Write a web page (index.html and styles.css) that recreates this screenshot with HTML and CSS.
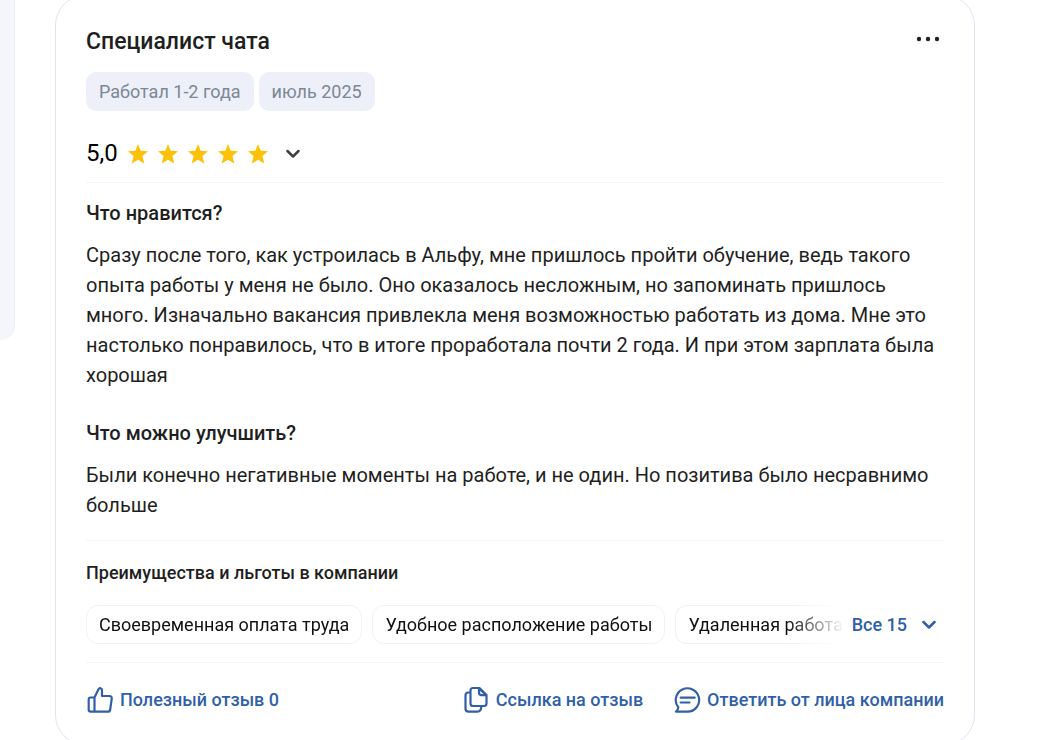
FILE: index.html
```html
<!DOCTYPE html>
<html lang="ru">
<head>
<meta charset="utf-8">
<title>Отзыв: Специалист чата</title>
<link rel="stylesheet" href="styles.css">
</head>
<body>
<svg class="sprite" aria-hidden="true">
  <symbol id="star" viewBox="0 0 20 20"><path d="M10 0l2.700 6.800 7.300.5-5.600 4.700 1.900 7.600L10 15.800 3.700 19.600l1.900-7.600L0 7.300l7.300-.5z"/></symbol>
  <symbol id="chevron" viewBox="0 0 14 10"><path d="M1.500 2L7 7.500 12.500 2"/></symbol>
</svg>
<div class="page">
  <aside class="rail"></aside>
  <article class="card">
    <header class="head">
      <h2 class="title">Специалист чата</h2>
      <button class="more" type="button" aria-label="Ещё">
        <svg width="24" height="6" viewBox="0 0 24 6"><circle cx="3" cy="3" r="2.200"/><circle cx="12" cy="3" r="2.200"/><circle cx="21" cy="3" r="2.200"/></svg>
      </button>
    </header>
    <div class="tags"><span class="tag">Работал 1-2 года</span><span class="tag">июль 2025</span></div>
    <button class="rating" type="button">
      <span class="score">5,0</span>
      <span class="stars">
        <svg class="star"><use href="#star"/></svg><svg class="star"><use href="#star"/></svg><svg class="star"><use href="#star"/></svg><svg class="star"><use href="#star"/></svg><svg class="star"><use href="#star"/></svg>
      </span>
      <svg class="chevron"><use href="#chevron"/></svg>
    </button>
    <section class="answers">
      <h3 class="question">Что нравится?</h3>
      <p class="answer">Сразу после того, как устроилась в Альфу, мне пришлось пройти обучение, ведь такого опыта работы у меня не было. Оно оказалось несложным, но запоминать пришлось много. Изначально вакансия привлекла меня возможностью работать из дома. Мне это настолько понравилось, что в итоге проработала почти 2 года. И при этом зарплата была хорошая</p>
      <h3 class="question">Что можно улучшить?</h3>
      <p class="answer">Были конечно негативные моменты на работе, и не один. Но позитива было несравнимо больше</p>
    </section>
    <section class="benefits">
      <h4 class="subtitle">Преимущества и льготы в компании</h4>
      <div class="benefit-row">
        <div class="benefit-list"><span class="benefit">Своевременная оплата труда</span><span class="benefit">Удобное расположение работы</span><span class="benefit last">Удаленная работа</span></div>
        <button class="all" type="button">Все 15 <svg class="chevron"><use href="#chevron"/></svg></button>
      </div>
    </section>
    <footer class="actions">
      <button class="action useful" type="button">
        <svg class="icon" viewBox="0 0 28 28"><path d="M4.500 11.500H8.500L12.500 3.200C13.500 1.500 16.300 2.200 16 4.500V10H23.500C25.200 10 26 11.200 25.700 12.800L24.200 23.500C24 25 23.300 25.700 22 25.700H4.800C3.500 25.700 2.700 25 2.700 23.500V13.300C2.700 12.200 3.400 11.500 4.500 11.500ZM8.500 11.500V25.500"/></svg>
        Полезный отзыв 0
      </button>
      <button class="action" type="button">
        <svg class="icon" viewBox="0 0 28 28"><path d="M11 2H17.500L24.500 9V17.500C24.500 19.200 23.600 20 22 20H11C9.300 20 8.500 19.200 8.500 17.500V4.500C8.500 2.800 9.300 2 11 2ZM17 2.500V6.500C17 8.500 17.700 9.200 19.500 9.200H24.300L17 2.500M8.500 6.500H6.500C4.500 6.500 3.500 7.500 3.500 9.500V22.500C3.500 24.700 4.500 25.700 6.500 25.700H15.500C18 25.700 19.300 24.200 19.300 20"/></svg>
        Ссылка на отзыв
      </button>
      <button class="action" type="button">
        <svg class="icon" viewBox="0 0 28 28"><path d="M3 25.700H14.500A11.700 11.700 0 1 0 5.300 21.300Q5.200 24 3 25.700ZM7.700 11.700H21.700M7.700 16.500H16.500"/></svg>
        Ответить от лица компании
      </button>
    </footer>
  </article>
</div>
</body>
</html>
```
FILE: styles.css
```css
* { box-sizing: border-box; }
body { margin: 0; height: 100vh; overflow: hidden; background: #fff; color: #1f1f22; font-family: Roboto, "Noto Sans", sans-serif; }
h2, h3, h4, p { margin: 0; font-weight: 500; }
button { padding: 0; border: 0; background: none; color: inherit; font: inherit; cursor: pointer; }
svg { display: block; flex: none; }
.sprite { position: absolute; width: 0; height: 0; }
.page { display: grid; grid-template-columns: 15px minmax(0, 1fr); column-gap: 40px; align-items: start; padding-right: 64px; }
.rail { height: 340px; background: #f5f6fc; border-right: 1px solid #e9ebf3; border-bottom-right-radius: 24px; }
.card { margin-top: -5px; padding: 30px; border: 1px solid #dfe4ee; border-radius: 30px; }
.head { display: flex; justify-content: space-between; align-items: flex-start; }
.title { font-size: 23px; line-height: 32px; }
.more { padding: 10px 4px; }
.more svg { fill: #1f1f22; }
.tags { display: flex; gap: 5px; margin-top: 14px; }
.tag { padding: 1px 13px 0; border-radius: 10px; background: #edf0f9; color: #7b8794; font-size: 18px; line-height: 38px; }
.rating { display: flex; align-items: center; margin-top: 26px; color: #000; }
.score { font-size: 24px; line-height: 32px; }
.stars { display: flex; gap: 10px; margin: 0 18px 0 10px; padding-top: 2px; }
.star { width: 20px; height: 20px; fill: #ffc107; }
.chevron { width: 14px; height: 10px; fill: none; stroke: currentColor; stroke-width: 2.500; stroke-linecap: round; stroke-linejoin: round; }
.rating .chevron { margin-top: 2px; color: #404044; }
.answers { margin-top: 13px; border-top: 1px solid #f3f4f9; }
.question { margin-top: 15px; font-size: 20px; line-height: 30px; }
.answer { margin-top: 12px; font-size: 20px; line-height: 30px; font-weight: 400; }
.answer + .question { margin-top: 28px; }
.benefits { margin-top: 20px; padding: 20px 0 18px; border: solid #f3f4f9; border-width: 1px 0; }
.subtitle { font-size: 18px; line-height: 24px; }
.benefit-row { display: flex; align-items: center; margin-top: 20px; }
.benefit-list { display: flex; flex: 1; gap: 10px; min-width: 0; overflow: hidden; mask-image: linear-gradient(to left, transparent, #000 56px); }
.benefit { flex: none; padding: 1px 12px 0; border: 1px solid #eff1f8; border-radius: 12px; font-size: 18px; line-height: 36px; color: #111; }
.benefit.last { padding-right: 0; border-right: 0; border-radius: 12px 0 0 12px; }
.all { display: flex; align-items: center; gap: 15px; padding: 1px 8px 0; color: #315fa8; font-size: 18px; font-weight: 500; line-height: 38px; }
.actions { display: flex; gap: 30px; padding-top: 23px; color: #315fa8; font-size: 18px; font-weight: 500; line-height: 28px; }
.action { display: flex; align-items: center; gap: 6px; white-space: nowrap; }
.useful { margin-right: auto; }
.icon { width: 28px; height: 28px; fill: none; stroke: currentColor; stroke-width: 2.200; stroke-linecap: round; stroke-linejoin: round; }
```
